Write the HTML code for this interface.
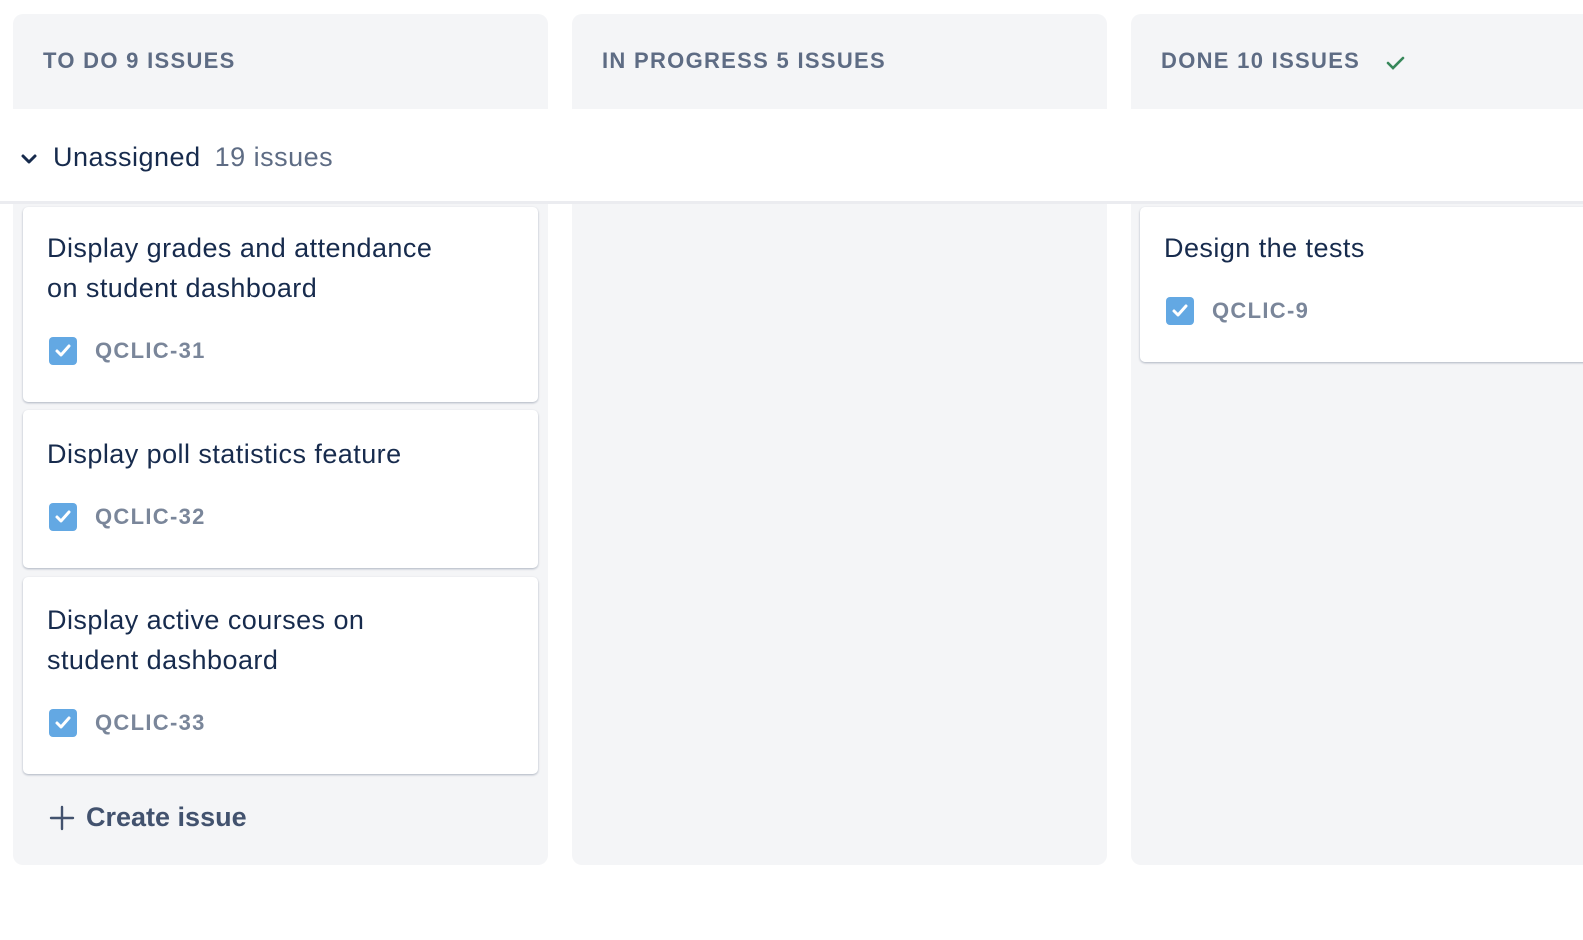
<!DOCTYPE html>
<html><head><style>
*{box-sizing:border-box;margin:0;padding:0}
body{width:1583px;height:940px;background:#fff;font-family:"Liberation Sans",sans-serif;position:relative;overflow:hidden}
.col{position:absolute;top:14px;height:851px;background:#f4f5f7;border-radius:10px;width:535px}
.hd{position:absolute;top:48px;font-size:22px;font-weight:bold;color:#5e6c84;letter-spacing:1.3px}
.band{position:absolute;left:0;top:109px;width:1583px;height:95px;background:#fff;border-bottom:3px solid #ebecf0}
.card{position:absolute;background:#fff;border-radius:5px;box-shadow:0 1px 2px rgba(9,30,66,.3)}
.t{position:absolute;left:24px;font-size:27px;line-height:40px;color:#172b4d;letter-spacing:0.45px}
.k{position:absolute;left:26px;display:flex;align-items:center}
.cb{width:28px;height:28px;background:#63a8e3;border-radius:4px;display:flex;align-items:center;justify-content:center}
.k span{margin-left:18px;font-size:22px;font-weight:bold;color:#7a869a;letter-spacing:1.3px}
</style></head><body>
<div class="col" style="left:13px"></div>
<div class="col" style="left:572px"></div>
<div class="col" style="left:1131px;width:470px"></div>
<div class="hd" style="left:43px">TO DO 9 ISSUES</div>
<div class="hd" style="left:602px">IN PROGRESS 5 ISSUES</div>
<div class="hd" style="left:1161px">DONE 10 ISSUES</div>
<svg style="position:absolute;left:1385px;top:54px" width="22" height="18" viewBox="0 0 22 18"><path d="M3 9l5 5 10-10" stroke="#36875a" stroke-width="2.6" fill="none" stroke-linecap="round"/></svg>
<div class="band"></div>
<svg style="position:absolute;left:20px;top:152px" width="18" height="14" viewBox="0 0 18 14"><path d="M3 4l6 6 6-6" stroke="#172b4d" stroke-width="3" fill="none" stroke-linecap="round" stroke-linejoin="round"/></svg>
<div style="position:absolute;left:53px;top:142px;font-size:27px;color:#172b4d;letter-spacing:0.5px">Unassigned <span style="color:#5e6c84;margin-left:6px">19 issues</span></div>

<div class="card" style="left:23px;top:207px;width:515px;height:195px">
<div class="t" style="top:21px">Display grades and attendance<br>on student dashboard</div>
<div class="k" style="top:130px"><div class="cb"><svg width="18" height="16" viewBox="0 0 18 16"><path d="M3 8l4 4 8-9" stroke="#fff" stroke-width="3" fill="none" stroke-linecap="round" stroke-linejoin="round"/></svg></div><span>QCLIC-31</span></div>
</div>
<div class="card" style="left:23px;top:410px;width:515px;height:158px">
<div class="t" style="top:24px">Display poll statistics feature</div>
<div class="k" style="top:93px"><div class="cb"><svg width="18" height="16" viewBox="0 0 18 16"><path d="M3 8l4 4 8-9" stroke="#fff" stroke-width="3" fill="none" stroke-linecap="round" stroke-linejoin="round"/></svg></div><span>QCLIC-32</span></div>
</div>
<div class="card" style="left:23px;top:577px;width:515px;height:197px">
<div class="t" style="top:23px">Display active courses on<br>student dashboard</div>
<div class="k" style="top:132px"><div class="cb"><svg width="18" height="16" viewBox="0 0 18 16"><path d="M3 8l4 4 8-9" stroke="#fff" stroke-width="3" fill="none" stroke-linecap="round" stroke-linejoin="round"/></svg></div><span>QCLIC-33</span></div>
</div>
<svg style="position:absolute;left:49px;top:805px" width="26" height="26" viewBox="0 0 26 26"><path d="M13 2v22M2 13h22" stroke="#42526e" stroke-width="2.4" stroke-linecap="round"/></svg>
<div style="position:absolute;left:86px;top:802px;font-size:27px;font-weight:bold;color:#42526e">Create issue</div>

<div class="card" style="left:1140px;top:207px;width:460px;height:155px">
<div class="t" style="top:21px">Design the tests</div>
<div class="k" style="top:90px"><div class="cb"><svg width="18" height="16" viewBox="0 0 18 16"><path d="M3 8l4 4 8-9" stroke="#fff" stroke-width="3" fill="none" stroke-linecap="round" stroke-linejoin="round"/></svg></div><span>QCLIC-9</span></div>
</div>
</body></html>
